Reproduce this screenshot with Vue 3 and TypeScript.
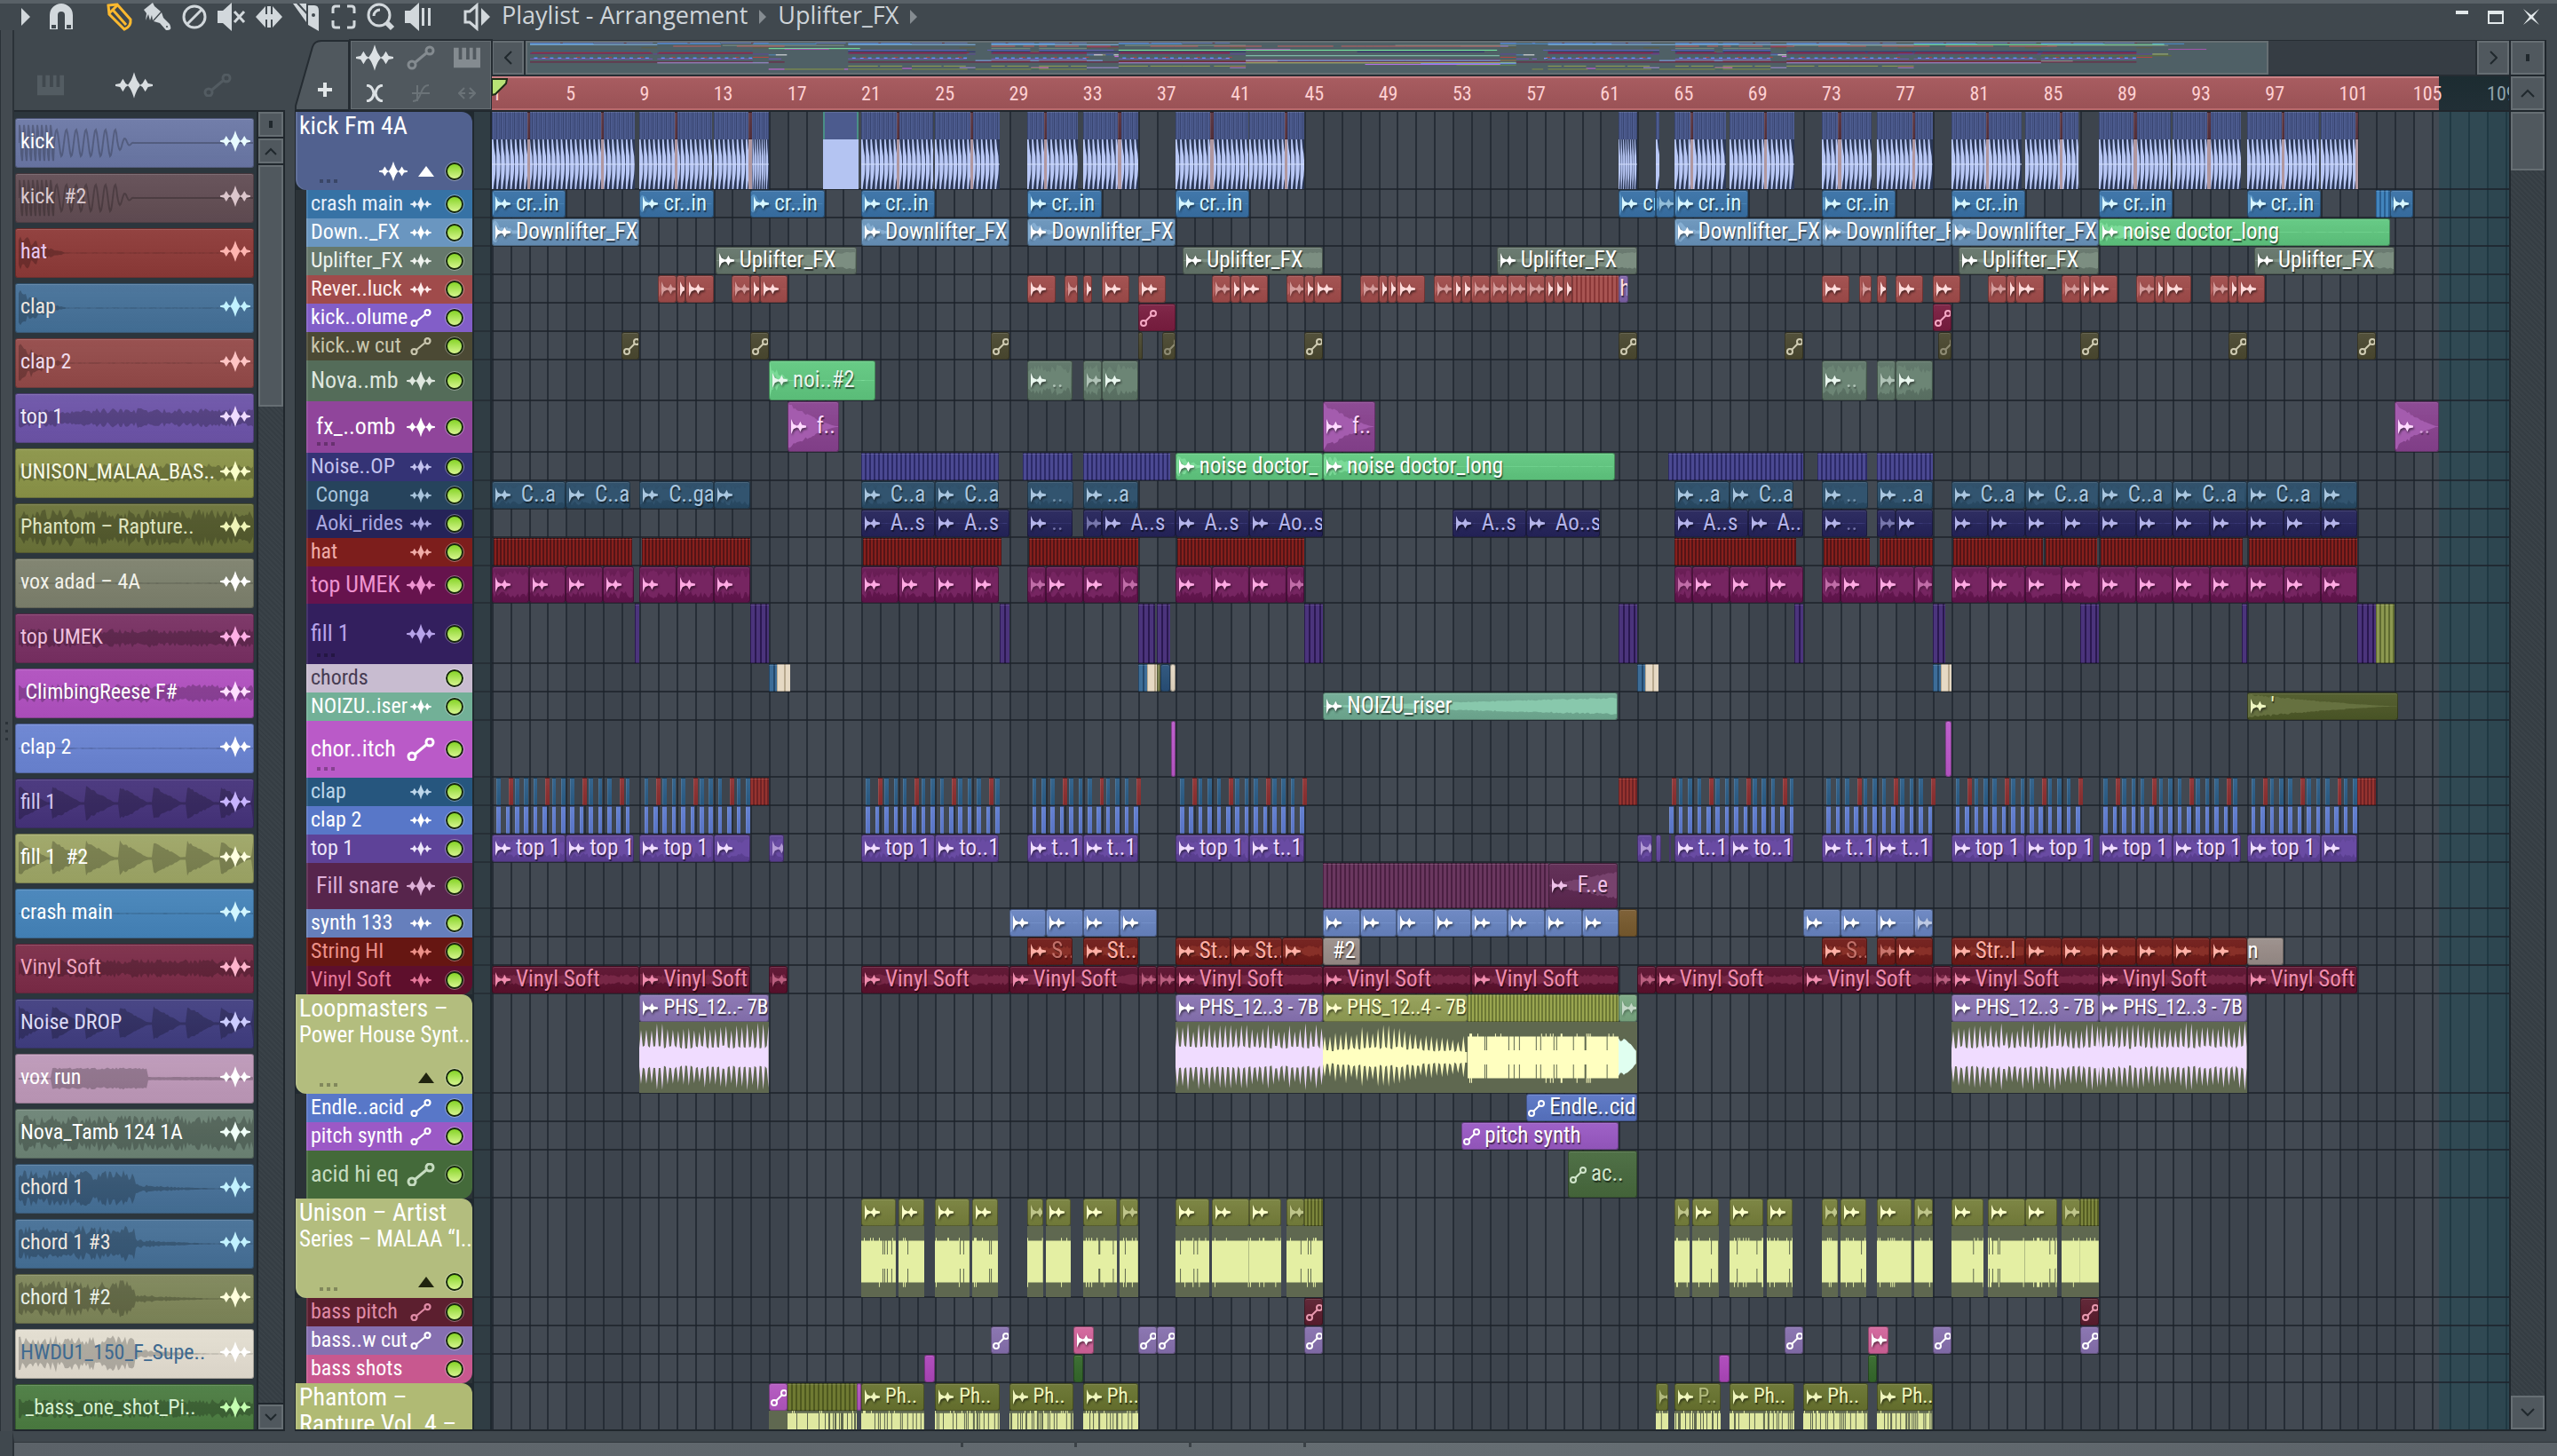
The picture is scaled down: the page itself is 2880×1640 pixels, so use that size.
<script setup lang="ts">
type IconKind = 'wave' | 'auto' | 'none'
type WaveShape = 'flat' | 'decay' | 'longDecay' | 'grow' | 'noise' | 'tail' | 'gate' | 'steady' | 'swell' | 'block' | 'comb' | 'teeth' | 'bulge' | 'puff' | 'chirp'

interface Clip {
  from: number
  to: number
  label?: string
  kind?: 'audio' | 'auto' | 'bare' | 'stripes' | 'kick' | 'kickFast' | 'kickSolid' | 'tick'
  color?: string
  ink?: string
  stripe?: string
  period?: number
  wave?: WaveShape
  low?: string
  lowWave?: WaveShape
}

interface Track {
  name: string[]
  height: number
  head: string
  ink: string
  icon: IconKind
  clip: string
  clipInk?: string
  group?: boolean
  last?: boolean
  dots?: boolean
  split?: boolean
  wave?: WaveShape
  waveColor?: string
  clips: Clip[]
}

interface PickerItem {
  name: string
  color: string
  ink: string
  icon: string
  wave: WaveShape
}

const BARS = 109.2
const BAR_UNITS = 20.8

const at = (bar: number): string => `${(bar / BARS) * 100}%`
const span = (clip: Clip): string => `${((clip.to - clip.from) / BARS) * 100}%`

function noise(seed: number): () => number {
  let s = (seed * 7919 + 104729) % 2147483647
  return () => {
    s = (s * 48271) % 2147483647
    return s / 2147483647
  }
}

function envelope(shape: WaveShape, t: number): number {
  switch (shape) {
    case 'decay': return Math.max(0.02, Math.pow(Math.max(0, 1 - t * 4.5), 1.4))
    case 'longDecay': return Math.max(0.02, Math.pow(1 - t, 1.3))
    case 'grow': return 0.04 + t * 0.66
    case 'noise': return 0.45
    case 'tail': return t < 0.5 ? 0.85 : Math.max(0.02, 0.22 * Math.pow(1 - (t - 0.5) * 2, 2))
    case 'gate': return Math.max(0.08, 1 - ((t * 7) % 1) * 1.1) * 0.85
    case 'steady': return 0.85
    case 'swell': return t < 0.14 ? 0.04 : t < 0.55 ? 0.5 : 0.08
    case 'puff': return t < 0.4 ? 0.55 : 0.55 - (t - 0.4) * 0.6
    case 'bulge': return 0.62 + 0.32 * Math.sin(Math.PI * Math.min(1, t * 1.25))
    case 'teeth': return 1
    default: return 0.03
  }
}

function barPath(width: number, mid: number, seed: number, level: number, gaps: number): string {
  const rnd = noise(seed)
  let d = ''
  for (let x = 0; x < width; x += 1) {
    const r = rnd()
    if (r < gaps && x > 0) {
      d += `M${x} ${mid - mid * 0.2}h1V${mid + mid * 0.2}h-1Z`
      continue
    }
    const a = mid * (r > 0.86 ? Math.min(1, level + 0.05) : level - 0.03)
    const b = mid * (r > 0.92 ? Math.min(1, level + 0.1) : level - 0.03)
    d += `M${x} ${(mid - a).toFixed(1)}h1V${(mid + b).toFixed(1)}h-1Z`
  }
  return d
}

function wavePath(shape: WaveShape, width: number, height: number, seed: number): string {
  const mid = height / 2
  if (shape === 'chirp') {
    let d = `M0 ${mid}`
    for (let x = 0; x <= 130; x += 1) {
      const phase = 2 * Math.PI * (x < 40 ? x / 5 : 8 + (x - 40) / 11)
      const amp = (x < 40 ? 0.85 : 0.6) * (x > 110 ? (130 - x) / 30 : 1)
      d += `L${x} ${(mid - Math.sin(phase) * mid * amp).toFixed(1)}`
    }
    return `${d}H${width}`
  }
  if (shape === 'block') return barPath(width, mid, seed, 0.62, 0.05)
  if (shape === 'comb') return barPath(width, mid, seed, 0.96, 0.24)
  const rnd = noise(seed)
  const smooth = shape === 'longDecay' || shape === 'gate' || shape === 'grow' || shape === 'puff' || shape === 'swell'
  const upper: string[] = []
  const lower: string[] = []
  let i = 0
  for (let x = 0; x <= width; x += 2) {
    const env = envelope(shape, x / Math.max(width, 1))
    const r = rnd()
    let a: number
    if (shape === 'teeth' || shape === 'bulge') a = env * (i % 3 === 1 ? 0.72 + r * 0.26 : 0.24 + r * 0.1)
    else if (smooth) a = env * (0.82 + r * 0.18)
    else a = env * (0.45 + r * 0.55)
    const b = a * (shape === 'teeth' ? 0.96 : 0.88 + rnd() * 0.12)
    upper.push(`${x} ${(mid - a * mid).toFixed(1)}`)
    lower.unshift(`${x} ${(mid + b * mid).toFixed(1)}`)
    i += 1
  }
  return `M${upper.join('L')}L${lower.join('L')}Z`
}

function kickPath(width: number, beat: number): string {
  let d = ''
  for (let x = 0; x + 1 < width; x += beat) {
    const n = (k: number): string => (x + beat * k).toFixed(1)
    d += `M${n(0)} 0L${n(0.3)} 0L${n(0.5)} 10Q${n(0.86)} 18 ${n(0.86)} 28Q${n(0.86)} 40 ${n(0.5)} 48L${n(0.3)} 56L${n(0)} 56Z`
  }
  return d
}

const units = (clip: Clip): number => Math.max(2, Math.round((clip.to - clip.from) * BAR_UNITS))

function chain(points: number[], labels: string[] = [], extra: Partial<Clip> = {}): Clip[] {
  return points.slice(1).map((to, i) => ({ from: points[i], to, label: labels[i], ...extra }))
}
function bare(from: number, to: number, color: string, extra: Partial<Clip> = {}): Clip {
  return { from, to, kind: 'bare', color, ...extra }
}
function auto(from: number, to: number, label?: string, extra: Partial<Clip> = {}): Clip {
  return { from, to, label, kind: 'auto', ...extra }
}
function stripes(from: number, to: number, color: string, stripe: string, period: number, extra: Partial<Clip> = {}): Clip {
  return { from, to, kind: 'stripes', color, stripe, period, ...extra }
}
function ticks(ranges: number[][], color: string, withSnare: boolean): Clip[] {
  const out: Clip[] = []
  ranges.forEach(([a, b]) => {
    for (let k = Math.ceil(a * 2); k < b * 2; k += 1) {
      const start = k / 2 + 0.25
      if (start + 0.2 > b + 0.05) continue
      const next = Math.round(start + 0.25)
      const onSnare = withSnare && Math.abs(start - (next - 0.25)) < 0.01 && next % 2 === (start < 36 ? 1 : 0)
      out.push(onSnare
        ? { from: start + 0.15, to: start + 0.39, kind: 'tick', color: '#8c2f30' }
        : { from: start, to: start + 0.22, kind: 'tick', color })
    }
  })
  return out
}
function markers(): Clip[] {
  const spots = [1, 5, 9, 13, 21, 25, 29, 33, 38, 42].map((n) => n + 0.9)
  const later = [64, 68, 72, 76, 80, 84, 88, 92, 96, 100].map((n) => n + 0.88)
  return [...spots, ...later].map((n) => ({ from: n, to: n + 0.16, kind: 'tick' as const, color: '#56303c', low: '#b0979f' }))
}

const kickClips: Clip[] = [
  ...[[0, 3.97], [4, 7.72], [8, 11.94], [12, 14], [20, 23.9], [24, 27.5], [29, 31.7], [32, 35], [37, 40.95], [41, 44],
    [63, 63.2], [64, 66.8], [67, 70.5], [72, 74.7], [75, 78], [79, 82.8], [83, 85.9], [87, 90.9], [91, 94.7], [95, 98.9], [99, 101]]
    .map(([from, to]) => ({ from, to, kind: 'kick' as const })),
  { from: 14, to: 15, kind: 'kickFast' },
  { from: 61, to: 62, kind: 'kickFast' },
  { from: 17.95, to: 19.85, kind: 'kickSolid' },
  ...markers(),
]

const rever = (n: number): Clip[] => chain([n, n + 1, n + 1.5, n + 3])
const fill = (from: number, to: number): Clip => stripes(from, to, '#4b347c', '#2a1850', 6)
const indigo = (from: number, to: number): Clip => stripes(from, to, '#4b4992', '#2c2a68', 5)
const hats = (from: number, to: number): Clip => stripes(from, to, '#861f1c', '#541416', 4)
const blueCream = (n: number, end: number): Clip[] => [
  stripes(n, n + 0.45, '#3d6d98', '#24486a', 6),
  stripes(n + 0.45, end, '#e6d9c4', '#b8a98f', 9),
]
const evens = [79, 81, 83, 85, 87, 89, 91, 93, 95, 97, 99, 101]
const clapRanges = [[0, 7.5], [8, 14], [20, 27.5], [29, 35], [37, 44], [63.5, 70.5], [72, 78], [79, 86], [87, 94.5], [95, 101]]
const uni = (from: number, to: number): Clip => ({ from, to, lowWave: 'block', low: '#e4efa3' })
const phan = (from: number, to: number, label?: string): Clip => ({ from, to, label, lowWave: 'comb', low: '#dfe8a0' })

const tracks: Track[] = [
  { name: ['kick Fm 4A'], height: 88, head: '#51618f', ink: '#ffffff', icon: 'wave', clip: '#4c5b8e', group: true, dots: true, split: true, clips: kickClips },
  {
    name: ['crash main'], height: 32, head: '#3672a5', ink: '#e6effa', icon: 'wave', clip: '#3871a6', clipInk: '#d6f6ff', wave: 'decay', waveColor: '#5793c4',
    clips: [
      ...[0, 8, 14, 20, 29, 37, 64, 72, 79, 87, 95].map((n) => ({ from: n, to: n + 4, label: 'cr..in' })),
      { from: 61, to: 63, label: 'cr' }, { from: 63, to: 64 },
      stripes(102, 102.75, '#4285bd', '#2a5f91', 5), { from: 102.75, to: 104 },
    ],
  },
  {
    name: ['Down.._FX'], height: 32, head: '#6a96c0', ink: '#ffffff', icon: 'wave', clip: '#6893bb', wave: 'decay', waveColor: '#86aed2',
    clips: [
      ...chain([0, 8], ['Downlifter_FX']), ...chain([20, 28], ['Downlifter_FX']), ...chain([29, 37], ['Downlifter_FX']),
      ...chain([64, 72, 79, 87], ['Downlifter_FX', 'Downlifter_FX', 'Downlifter_FX']),
      { from: 87, to: 102.75, label: 'noise doctor_long', color: '#5fc77f' },
    ],
  },
  {
    name: ['Uplifter_FX'], height: 32, head: '#66786c', ink: '#eef2ee', icon: 'wave', clip: '#64756a', wave: 'grow', waveColor: '#7c8e81',
    clips: [[12.1, 19.75], [37.4, 45], [54.4, 62], [79.4, 87], [95.4, 103]].map(([from, to]) => ({ from, to, label: 'Uplifter_FX' })),
  },
  {
    name: ['Rever..luck'], height: 32, head: '#a04b4b', ink: '#ffecec', icon: 'wave', clip: '#a04b4a', clipInk: '#ffdada', wave: 'decay', waveColor: '#b4605e',
    clips: [
      ...[9, 13, 39, 43, 81, 85, 89, 93].flatMap(rever),
      ...[29, 33, 35, 72, 76, 78].map((n) => ({ from: n, to: n + 1.5 })),
      ...[31, 74].map((n) => ({ from: n, to: n + 0.7 })), ...[32, 75].map((n) => ({ from: n, to: n + 0.5 })),
      ...chain([47, 48, 48.5, 49, 50.5]),
      ...chain([51, 52, 52.5, 53, 54, 55, 56, 57, 57.5, 58, 58.5]),
      stripes(58.5, 61, '#a85452', '#8a3838', 5), { from: 61, to: 61.5, kind: 'bare', color: '#7d62a8', label: 'h' },
    ],
  },
  {
    name: ['kick..olume'], height: 32, head: '#825ec8', ink: '#ffffff', icon: 'auto', clip: '#7a1d40', clipInk: '#f5a8c4',
    clips: [auto(35, 37), auto(78, 79)],
  },
  {
    name: ['kick..w cut'], height: 32, head: '#4b4934', ink: '#c9c6ae', icon: 'auto', clip: '#4a4830', clipInk: '#cfcbb2',
    clips: [7, 14, 27, 44, 61, 70, 86, 94, 101].map((n) => auto(n, n + 1)).concat([bare(35, 35.25, '#4a4830'), auto(36.3, 37, '', { ink: '#8f8c74' }), auto(78.3, 79, '', { ink: '#8f8c74' })]),
  },
  {
    name: ['Nova..mb'], height: 46, head: '#546c59', ink: '#dfe7df', icon: 'wave', clip: '#5c7466', clipInk: '#e9f6ee', wave: 'steady', waveColor: '#6c8575',
    clips: [
      { from: 15, to: 20.75, label: 'noi..#2', color: '#60c880', wave: 'decay' },
      ...[29, 72].flatMap((n) => [{ from: n, to: n + 2.45, label: '..' }, { from: n + 3, to: n + 4 }, { from: n + 4, to: n + 6 }]),
    ],
  },
  {
    name: ['\u00a0fx_..omb'], height: 58, head: '#90459b', ink: '#ffffff', icon: 'wave', clip: '#88428f', clipInk: '#ffd9ff', dots: true, wave: 'longDecay', waveColor: '#a45cae',
    clips: [{ from: 16, to: 18.8, label: '\u00a0f..' }, { from: 45, to: 47.8, label: '\u00a0f..' }, { from: 103, to: 105.4, label: '..' }],
  },
  {
    name: ['Noise..OP'], height: 32, head: '#343375', ink: '#c3c2ee', icon: 'wave', clip: '#37347a', wave: 'decay', waveColor: '#7bdb98',
    clips: [
      indigo(20, 27.45), indigo(28.75, 31.45), indigo(32, 36.7), indigo(63.7, 71), indigo(71.75, 74.45), indigo(75, 78),
      { from: 37, to: 45, label: 'noise doctor_', color: '#60c880', ink: '#ffffff' },
      { from: 45, to: 60.8, label: 'noise doctor_long', color: '#60c880', ink: '#ffffff' },
    ],
  },
  {
    name: ['\u00a0Conga'], height: 32, head: '#26435c', ink: '#a8c4dc', icon: 'wave', clip: '#284a65', clipInk: '#a9c6df', wave: 'steady', waveColor: '#32546f',
    clips: [
      ...chain([0, 4, 7.5], ['\u00a0C..a', '\u00a0C..a']), ...chain([8, 12, 14], ['\u00a0C..ga']), ...chain([20, 24, 27.45], ['\u00a0C..a', '\u00a0C..a']),
      ...[29, 72].map((n) => ({ from: n, to: n + 2.5, label: '..' })), ...[32, 75].map((n) => ({ from: n, to: n + 3, label: '..a' })),
      ...chain([64, 67, 70.45], ['..a', '\u00a0C..a']),
      ...chain([79, 83, 87, 91, 95, 99, 101], ['\u00a0C..a', '\u00a0C..a', '\u00a0C..a', '\u00a0C..a', '\u00a0C..a']),
    ],
  },
  {
    name: ['\u00a0Aoki_rides'], height: 32, head: '#252358', ink: '#a9a8e0', icon: 'wave', clip: '#24235a', clipInk: '#b4b4ea', wave: 'flat', waveColor: '#3b3a78',
    clips: [
      ...chain([20, 24, 28], ['\u00a0A..s', '\u00a0A..s']), { from: 29, to: 31.45, label: '..' },
      ...chain([32, 33, 37, 41, 45], ['', '\u00a0A..s', '\u00a0A..s', '\u00a0Ao..s']), ...chain([52, 56, 60], ['\u00a0A..s', '\u00a0Ao..s']),
      ...chain([64, 68, 71], ['\u00a0A..s', '\u00a0A..']), { from: 72, to: 74.45, label: '..' }, ...chain([75, 76, 78]), ...chain(evens),
    ],
  },
  {
    name: ['hat'], height: 32, head: '#7d1e1c', ink: '#f0aca8', icon: 'wave', clip: '#7d1e1c',
    clips: [hats(0.1, 7.6), hats(8.1, 14), hats(20.1, 27.6), hats(29.1, 35), hats(37.1, 44), hats(64, 70.6), hats(72.1, 74.6), hats(75.1, 78), hats(79.1, 83.95), hats(84.1, 86.9), hats(87.1, 94.8), hats(95.1, 101)],
  },
  {
    name: ['top UMEK'], height: 42, head: '#66134d', ink: '#ee93d0', icon: 'wave', clip: '#63144e', clipInk: '#ffa9e2', wave: 'steady', waveColor: '#762561',
    clips: [
      ...chain([0, 2, 4, 6, 7.7]), ...chain([8, 10, 12, 14]), ...chain([20, 22, 24, 26, 27.45]), ...chain([29, 30, 32, 34, 35]),
      ...chain([37, 39, 41, 43, 44]), ...chain([64, 65, 67, 69, 71]), ...chain([72, 73, 75, 77, 78]), ...chain(evens),
    ],
  },
  {
    name: ['fill 1'], height: 68, head: '#331f5e', ink: '#b7a3ea', icon: 'wave', clip: '#341f62', dots: true,
    clips: [
      fill(7.75, 8), fill(14, 15), fill(27.5, 28), fill(35, 35.9), fill(36, 36.7), fill(44, 45), fill(61, 62), fill(70.5, 71),
      fill(78, 78.7), fill(86, 87), fill(94.75, 95), fill(101, 102), stripes(102, 103, '#8c9850', '#5f6b30', 5),
    ],
  },
  {
    name: ['chords'], height: 32, head: '#c8bcd0', ink: '#463b52', icon: 'none', clip: '#3d6d98',
    clips: [
      ...blueCream(15, 16.15), ...blueCream(35, 36), bare(36, 36.2, '#7d8450'), bare(36.2, 36.7, '#285079'), bare(36.7, 37, '#e6d9c4'),
      ...blueCream(62, 63.15), ...blueCream(78, 79),
    ],
  },
  {
    name: ['NOIZU..iser'], height: 32, head: '#72b097', ink: '#ffffff', icon: 'wave', clip: '#70ab93', wave: 'grow', waveColor: '#88c8ac',
    clips: [{ from: 45, to: 60.95, label: 'NOIZU_riser' }, { from: 95, to: 103.2, label: '\'', color: '#4d5827', wave: 'longDecay', ink: '#edf5c0', stripe: '#667140' }],
  },
  {
    name: ['chor..itch'], height: 64, head: '#ba5ac8', ink: '#ffffff', icon: 'auto', clip: '#bb58ca', dots: true,
    clips: [bare(36.75, 37, '#bb58ca'), bare(78.7, 79, '#bb58ca')],
  },
  {
    name: ['clap'], height: 32, head: '#26567e', ink: '#bcd6ea', icon: 'wave', clip: '#2a5a82',
    clips: [...ticks(clapRanges, '#2b5d87', true), ...[14, 61, 101].map((n) => stripes(n, n + 1, '#96332f', '#702325', 4))],
  },
  {
    name: ['clap 2'], height: 32, head: '#5877c8', ink: '#ffffff', icon: 'wave', clip: '#5d7bd0',
    clips: ticks(clapRanges, '#5d7bd0', false),
  },
  {
    name: ['top 1'], height: 32, head: '#5e4298', ink: '#ece6fa', icon: 'wave', clip: '#5c4096', clipInk: '#f0dcff', wave: 'steady', waveColor: '#694ba3',
    clips: [
      ...chain([0, 4, 7.7], ['top 1', 'top 1']), ...chain([8, 12, 14], ['top 1']), { from: 15, to: 15.8 },
      ...chain([20, 24, 27.45], ['top 1', 'to..1']), ...chain([29, 32, 35], ['t..1', 't..1']), ...chain([37, 41, 44], ['top 1', 't..1']),
      { from: 62, to: 62.8 }, bare(63, 63.3, '#6549a0'), bare(63.75, 63.85, '#6549a0'),
      ...chain([64, 67, 70.45], ['t..1', 'to..1']), ...chain([72, 75, 78], ['t..1', 't..1']),
      ...chain([79, 83, 86.7], ['top 1', 'top 1']), ...chain([87, 91, 94.7], ['top 1', 'top 1']), ...chain([95, 99, 101], ['top 1']),
    ],
  },
  {
    name: ['\u00a0Fill snare'], height: 52, head: '#57254c', ink: '#deb0d8', icon: 'wave', clip: '#5c2750', clipInk: '#eec0e8', wave: 'grow', waveColor: '#77426d',
    clips: [stripes(45, 57.2, '#6a375f', '#4b2042', 5), { from: 57.2, to: 60.95, label: '\u00a0F..e' }],
  },
  {
    name: ['synth 133'], height: 32, head: '#667fbc', ink: '#ffffff', icon: 'wave', clip: '#6884c1', wave: 'decay', waveColor: '#7f9ad2',
    clips: [
      ...chain([28, 30, 32, 34, 36]), ...chain([45, 47, 49, 51, 53, 55, 57, 59, 61]), bare(61, 62, '#785a2e'), ...chain([71, 73, 75, 77, 78]),
    ],
  },
  {
    name: ['String HI'], height: 32, head: '#661612', ink: '#ec9088', icon: 'wave', clip: '#701a17', clipInk: '#ffb0a6', wave: 'noise', waveColor: '#883028',
    clips: [
      { from: 29, to: 31.45, label: 'S..' }, { from: 32, to: 35, label: 'St..' }, ...chain([37, 40, 42.8, 45], ['St..', 'St..']),
      { from: 45, to: 47, kind: 'bare', color: '#998d89', label: '#2', ink: '#ffffff' },
      { from: 72, to: 74.45, label: 'S..' }, ...chain([75, 76, 78]), ...chain([79, 83, 85, 87, 89, 91, 93, 95], ['Str..I']),
      { from: 95, to: 97, kind: 'bare', color: '#998d89', label: 'n', ink: '#ffffff' },
    ],
  },
  {
    name: ['Vinyl Soft'], height: 32, head: '#5e0f2c', ink: '#e5789a', icon: 'wave', clip: '#5b102d', clipInk: '#f08cae', last: true, wave: 'noise', waveColor: '#772746',
    clips: [
      ...chain([0, 8, 14], ['Vinyl Soft', 'Vinyl Soft']), { from: 15, to: 16 }, ...chain([20, 28, 35, 36, 37, 45, 53, 61], ['Vinyl Soft', 'Vinyl Soft', '', '', 'Vinyl Soft', 'Vinyl Soft', 'Vinyl Soft']),
      ...chain([62, 63, 71, 78, 79, 87, 95, 101], ['', 'Vinyl Soft', 'Vinyl Soft', '', 'Vinyl Soft', 'Vinyl Soft', 'Vinyl Soft']),
    ],
  },
  {
    name: ['Loopmasters –', 'Power House Synt..'], height: 112, head: '#b3bd7e', ink: '#ffffff', icon: 'none', clip: '#8873b2', group: true, dots: true, split: true,
    clips: [
      { from: 8, to: 15, label: 'PHS_12..- 7B', low: '#f0dcff', lowWave: 'teeth' },
      { from: 37, to: 45, label: 'PHS_12..3 - 7B', low: '#f0dcff', lowWave: 'teeth' },
      { from: 45, to: 52.8, label: 'PHS_12..4 - 7B', color: '#929e55', ink: '#fdffce', low: '#ffffc0', lowWave: 'bulge', stripe: '#98a45c' },
      stripes(52.8, 61, '#9aa650', '#6c7835', 4, { low: '#ffffc0', lowWave: 'block' }),
      { from: 61, to: 62, color: '#7aa882', low: '#e0fff0', lowWave: 'puff' },
      ...chain([79, 87, 95], ['PHS_12..3 - 7B', 'PHS_12..3 - 7B'], { low: '#f0dcff', lowWave: 'teeth' }),
    ],
  },
  { name: ['Endle..acid'], height: 32, head: '#5877c8', ink: '#ffffff', icon: 'auto', clip: '#5874c4', clips: [auto(56, 62, 'Endle..cid')] },
  { name: ['pitch synth'], height: 32, head: '#9b59c6', ink: '#ffffff', icon: 'auto', clip: '#9959c4', clips: [auto(52.5, 61, 'pitch synth')] },
  { name: ['acid hi eq'], height: 54, head: '#446a3a', ink: '#c6dcc0', icon: 'auto', clip: '#47693d', clipInk: '#d2e6cc', last: true, clips: [auto(58.25, 62, 'ac..')] },
  {
    name: ['Unison – Artist', 'Series – MALAA “I..'], height: 112, head: '#b3bd7e', ink: '#ffffff', icon: 'none', clip: '#767f3b', clipInk: '#fbffc8', group: true, dots: true, split: true,
    clips: [
      ...[[20, 21.87], [22, 23.4], [24, 25.87], [26, 27.4], [29, 29.85], [30, 31.35], [32, 33.85], [34, 35], [37, 38.85], [39, 41], [41, 42.75], [43, 44],
        [64, 64.85], [65, 66.4], [67, 68.85], [69, 70.4], [72, 72.85], [73, 74.4], [75, 76.85], [77, 78], [79, 80.75], [81, 83], [83, 84.75], [85, 86]].map(([a, b]) => uni(a, b)),
      stripes(44, 45, '#7c863c', '#555d24', 4, { low: '#e4efa3', lowWave: 'block' }), stripes(86, 87, '#7c863c', '#555d24', 4, { low: '#e4efa3', lowWave: 'block' }),
    ],
  },
  { name: ['bass pitch'], height: 32, head: '#5c1f2f', ink: '#e08ba6', icon: 'auto', clip: '#5a1d2e', clipInk: '#e99ab0', clips: [auto(44, 45), auto(86, 87)] },
  {
    name: ['bass..w cut'], height: 32, head: '#866fb0', ink: '#ffffff', icon: 'auto', clip: '#8670ae',
    clips: [27, 35, 36, 44, 70, 78, 86].map((n) => auto(n, n + 1)).concat([31.5, 74.5].map((n) => ({ from: n, to: n + 1.1, color: '#d2639a' }))),
  },
  {
    name: ['bass shots'], height: 32, head: '#c8588f', ink: '#ffffff', icon: 'none', clip: '#ad46bb', last: true,
    clips: [bare(23.4, 24, '#ad46bb'), bare(31.5, 32, '#34682a'), bare(66.4, 67, '#ad46bb'), bare(74.5, 75, '#34682a')],
  },
  {
    name: ['Phantom –', 'Rapture Vol. 4 –'], height: 112, head: '#b0ba74', ink: '#ffffff', icon: 'none', clip: '#68732f', clipInk: '#eff5bc', group: true, split: true,
    clips: [
      auto(15, 16, '', { color: '#b356c0', ink: '#ffffff', low: '#5f6850', lowWave: 'flat' }), stripes(16, 19.75, '#6f7a32', '#4e581f', 5, { low: '#dfe8a0', lowWave: 'comb' }), bare(19.75, 20, '#b356c0'),
      phan(20, 23.4, 'Ph..'), phan(24, 27.5, 'Ph..'), phan(28, 31.5, 'Ph..'), phan(32, 35, 'Ph..'), phan(63, 63.7), phan(64, 66.5, 'P..'),
      phan(67, 70.5, 'Ph..'), phan(71, 74.5, 'Ph..'), phan(75, 78, 'Ph..'),
    ],
  },
]

const picker: PickerItem[] = [
  { name: 'kick', color: '#6a77a5', ink: '#ffffff', icon: '#e8fbff', wave: 'chirp' },
  { name: 'kick  #2', color: '#614c53', ink: '#d9c9ce', icon: '#dcc6cc', wave: 'chirp' },
  { name: 'hat', color: '#8d3937', ink: '#e8c8f0', icon: '#ffb4b0', wave: 'decay' },
  { name: 'clap', color: '#447098', ink: '#efe8e0', icon: '#c2f2ff', wave: 'decay' },
  { name: 'clap 2', color: '#934948', ink: '#f0dcec', icon: '#ffc4c4', wave: 'decay' },
  { name: 'top 1', color: '#6c53a8', ink: '#eeeaf8', icon: '#f0dcff', wave: 'noise' },
  { name: 'UNISON_MALAA_BAS..', color: '#8a9347', ink: '#f6f8e4', icon: '#fbffca', wave: 'noise' },
  { name: 'Phantom – Rapture..', color: '#6a7238', ink: '#dfe4c0', icon: '#f0f5b8', wave: 'steady' },
  { name: 'vox adad – 4A', color: '#7c806c', ink: '#f2f2ea', icon: '#ffffff', wave: 'flat' },
  { name: 'top UMEK', color: '#782f62', ink: '#eec0de', icon: '#ffb0e6', wave: 'noise' },
  { name: '\u00a0ClimbingReese F#', color: '#b04fbf', ink: '#ffffff', icon: '#ffe0ff', wave: 'noise' },
  { name: 'clap 2', color: '#6983d2', ink: '#ffffff', icon: '#ffffff', wave: 'flat' },
  { name: 'fill 1', color: '#45327a', ink: '#d0c4f0', icon: '#c8b4ff', wave: 'gate' },
  { name: 'fill 1  #2', color: '#9da565', ink: '#ffffff', icon: '#ffffe0', wave: 'gate' },
  { name: 'crash main', color: '#4483b9', ink: '#ffffff', icon: '#d2f6ff', wave: 'flat' },
  { name: 'Vinyl Soft', color: '#7b2b47', ink: '#f0a4be', icon: '#ffb4cc', wave: 'noise' },
  { name: 'Noise DROP', color: '#403d80', ink: '#dcdaf6', icon: '#ccccff', wave: 'gate' },
  { name: 'vox run', color: '#bd98b8', ink: '#ffffff', icon: '#ffffff', wave: 'swell' },
  { name: 'Nova_Tamb 124 1A', color: '#6c8375', ink: '#ffffff', icon: '#f0fff8', wave: 'steady' },
  { name: 'chord 1', color: '#456f96', ink: '#efe8e0', icon: '#c2f2ff', wave: 'tail' },
  { name: 'chord 1 #3', color: '#456f96', ink: '#efe8e0', icon: '#c2f2ff', wave: 'tail' },
  { name: 'chord 1 #2', color: '#7d8558', ink: '#e8f0e8', icon: '#ffffdc', wave: 'tail' },
  { name: 'HWDU1_150_F_Supe..', color: '#e3ddd0', ink: '#3f6a90', icon: '#ffffff', wave: 'tail' },
  { name: '\u00a0_bass_one_shot_Pi..', color: '#4a7b40', ink: '#d6f0d0', icon: '#c4ffb0', wave: 'noise' },
]

const barLines = Array.from({ length: 110 }, (_, i) => i)
const rulerMarks = Array.from({ length: 28 }, (_, i) => i * 4)

function fillStyle(clip: Clip, track: Track): Record<string, string> {
  const base = clip.color ?? track.clip
  if (clip.kind === 'stripes' && clip.stripe) {
    const p = clip.period ?? 5
    return { background: `repeating-linear-gradient(90deg, ${clip.stripe} 0 1px, ${base} 1px ${p - 1}px, ${clip.stripe} ${p - 1}px ${p}px)` }
  }
  return { backgroundColor: base }
}
const isKick = (clip: Clip): boolean => !!clip.kind && clip.kind.startsWith('kick')
const hasIcon = (clip: Clip): boolean => !clip.kind || clip.kind === 'audio'
const clipWave = (clip: Clip, track: Track): WaveShape | undefined => (hasIcon(clip) ? clip.wave ?? track.wave : undefined)
const waveTint = (clip: Clip, track: Track): string => {
  if (clip.stripe) return clip.stripe
  if (clip.color) return '#7bdb98'
  return track.waveColor ?? '#ffffff'
}
const inkOf = (clip: Clip, track: Track): string => clip.ink ?? track.clipInk ?? '#ffffff'
const mapColor = (clip: Clip, track: Track): string => clip.color ?? track.clip
</script>

<template>
  <div class="window">
    <svg class="defs" aria-hidden="true">
      <symbol id="i-wave" viewBox="0 0 40 28">
        <path d="M20 0C22 7 24 11 27 14C24 17 22 21 20 28C18 21 16 17 13 14C16 11 18 7 20 0ZM0 13L5 12L8 7L11 12L14 14L11 16L8 21L5 16L0 15ZM40 13L35 12L32 7L29 12L26 14L29 16L32 21L35 16L40 15Z" />
      </symbol>
      <symbol id="i-clip" viewBox="0 0 18 18">
        <path d="M0 0L3 6L7 8L9 7L11 3L13 7L18 8V10L13 11L11 15L9 11L7 10L3 12L0 18Z" />
      </symbol>
      <symbol id="i-auto" viewBox="0 0 32 26">
        <g fill="none" stroke="currentColor" stroke-width="3"><circle cx="6" cy="21" r="4" /><circle cx="26" cy="5" r="4" /><path d="M10 18L22 8" /></g>
      </symbol>
      <symbol id="i-piano" viewBox="0 0 32 24">
        <path d="M0 0H6V14H10V0H15V14H19V0H23V14H27V0H32V24H0Z" />
      </symbol>
    </svg>

    <div class="topstrip"></div>

    <header class="toolbar">
      <button class="tool menu" aria-label="Playlist options"><svg width="10" height="20" viewBox="0 0 10 20"><path d="M0 0L10 10L0 20Z" /></svg></button>
      <button class="tool" aria-label="Snap to grid"><svg width="28" height="30" viewBox="0 0 28 30"><path d="M1 29V13A13 13 0 0 1 27 13V29H18V13A4 4 0 0 0 10 13V29Z" /><path class="cut" d="M3 24H8V28H3ZM20 24H25V28H20Z" /></svg></button>
      <div class="tools">
        <button class="tool draw" aria-label="Draw"><svg width="30" height="32" viewBox="0 0 30 32"><g fill="none" stroke="currentColor" stroke-width="3"><path d="M2 3L12 2L27 19Q28 27 20 30L3 13Z" /><path d="M7 8L22 25M3 12L12 3" /></g></svg></button>
        <button class="tool" aria-label="Paint"><svg width="32" height="32" viewBox="0 0 32 32"><path d="M1 8L11 0L13 4L20 10L11 20L10 14L8 20L6 13L3 20L4 12ZM21 11L23 17L30 24Q34 32 26 31L19 23L12 21Z" /><circle class="cut" cx="27" cy="27" r="1" /></svg></button>
        <button class="tool" aria-label="Delete"><svg width="28" height="28" viewBox="0 0 28 28"><g fill="none" stroke="currentColor" stroke-width="3"><circle cx="14" cy="14" r="12" /><path d="M6 22L22 6" /></g></svg></button>
        <button class="tool" aria-label="Mute"><svg width="32" height="32" viewBox="0 0 32 32"><path d="M0 9H6L16 0V32L6 23H0Z" /><path d="M19 10L30 22M30 10L19 22" fill="none" stroke="currentColor" stroke-width="3" /></svg></button>
        <button class="tool" aria-label="Slip"><svg width="30" height="26" viewBox="0 0 30 26"><path d="M0 13L11 1V10H13V1H17V10H19V1L30 13L19 25V16H17V25H13V16H11V25Z" /></svg></button>
        <button class="tool" aria-label="Slice"><svg width="30" height="32" viewBox="0 0 30 32"><path d="M0 1H4L15 13V22ZM7 1H15V10ZM17 3H24Q29 3 29 9V32L17 25Z" /><circle class="cut" cx="23" cy="14" r="2" /></svg></button>
        <button class="tool" aria-label="Select"><svg width="28" height="28" viewBox="0 0 28 28"><path d="M2 10V5Q2 2 5 2H10M18 2H23Q26 2 26 5V10M26 18V23Q26 26 23 26H18M10 26H5Q2 26 2 23V18" fill="none" stroke="currentColor" stroke-width="3" /></svg></button>
        <button class="tool" aria-label="Zoom"><svg width="32" height="32" viewBox="0 0 32 32"><g fill="none" stroke="currentColor"><circle cx="14" cy="14" r="12" stroke-width="3" /><path d="M8 15A7 7 0 0 1 15 8" stroke-width="3" /><path d="M22 22L29 29" stroke-width="6" /></g></svg></button>
        <button class="tool" aria-label="Playback"><svg width="30" height="32" viewBox="0 0 30 32"><path d="M0 9H6L16 0V32L6 23H0ZM19 6H22V26H19ZM26 6H29V26H26Z" /></svg></button>
      </div>
      <button class="tool" aria-label="Preview"><svg width="30" height="32" viewBox="0 0 30 32"><path d="M2 10H7L15 3V29L7 22H2Z" fill="none" stroke="currentColor" stroke-width="3" /><path d="M20 6L30 16L20 26Z" /></svg></button>
      <nav class="crumbs">
        <a href="#arrangement">Playlist - Arrangement</a><i></i><a href="#pattern">Uplifter_FX</a><i></i>
      </nav>
      <div class="winbtns">
        <button aria-label="Minimize"><svg width="16" height="20" viewBox="0 0 16 20"><path d="M1 3H15V7H1Z" /></svg></button>
        <button aria-label="Maximize"><svg width="20" height="20" viewBox="0 0 20 20"><path d="M1 3H19V18H1ZM3 7V16H17V7Z" fill-rule="evenodd" /></svg></button>
        <button aria-label="Close"><svg width="20" height="20" viewBox="0 0 20 20"><path d="M1 1L10 8L19 1L12 10L19 19L10 12L1 19L8 10Z" /></svg></button>
      </div>
    </header>

    <div class="workspace">
      <div class="frame-left"><i></i><i></i><i></i></div>

      <aside class="picker">
        <div class="picker-tabs">
          <button class="dim" aria-label="Patterns"><svg width="30" height="24"><use href="#i-piano" /></svg></button>
          <button aria-label="Audio clips"><svg width="42" height="30"><use href="#i-wave" /></svg></button>
          <button class="dim" aria-label="Automation clips"><svg width="32" height="26"><use href="#i-auto" /></svg></button>
        </div>
        <div class="picker-body">
          <ul class="items">
            <li v-for="(item, i) in picker" :key="i" class="item" :style="{ backgroundColor: item.color, color: item.ink }">
              <svg class="item-wave" :class="{ line: item.wave === 'chirp' }" viewBox="0 0 264 50" preserveAspectRatio="none"><path :d="wavePath(item.wave, 264, 50, i + 3)" /></svg>
              <span>{{ item.name }}</span>
              <svg class="item-icon" width="34" height="24" :style="{ color: item.icon }"><use href="#i-wave" /></svg>
            </li>
          </ul>
          <div class="vscroll small">
            <button class="sbtn" aria-label="Scroll options"><b></b></button>
            <button class="sbtn" aria-label="Scroll up"><svg width="14" height="9" viewBox="0 0 14 9"><path d="M1 8L7 2L13 8" /></svg></button>
            <div class="track"><div class="thumb"></div></div>
            <button class="sbtn" aria-label="Scroll down"><svg width="14" height="9" viewBox="0 0 14 9"><path d="M1 1L7 7L13 1" /></svg></button>
          </div>
        </div>
      </aside>

      <main class="playlist">
        <div class="head">
          <div class="headtools">
            <svg class="tabshape" viewBox="0 0 62 81" preserveAspectRatio="none"><path d="M1 81V76L20 8Q22 1 30 1H61V81Z" /></svg>
            <button class="plus" aria-label="Add track"><svg width="16" height="16" viewBox="0 0 16 16"><path d="M6 0H10V6H16V10H10V16H6V10H0V6H6Z" /></svg></button>
            <div class="toggles">
              <button aria-label="Focus audio"><svg width="42" height="30"><use href="#i-wave" /></svg></button>
              <button class="off" aria-label="Focus automation"><svg width="32" height="28"><use href="#i-auto" /></svg></button>
              <button class="off" aria-label="Focus patterns"><svg width="30" height="24"><use href="#i-piano" /></svg></button>
              <button aria-label="Cross fade"><svg width="20" height="20" viewBox="0 0 20 20"><path d="M1 1Q8 2 9 10Q8 18 1 19M19 1Q12 2 11 10Q12 18 19 19" fill="none" stroke="currentColor" stroke-width="3" /></svg></button>
              <button class="faint" aria-label="Slide"><svg width="20" height="20" viewBox="0 0 20 20"><path d="M1 19C12 19 8 1 19 1M0 10H20M6 1V19" fill="none" stroke="currentColor" stroke-width="2" /></svg></button>
              <button class="faint" aria-label="Stretch"><svg width="20" height="14" viewBox="0 0 20 14"><path d="M7 1L1 7L7 13M13 1L19 7L13 13M1 7H8M12 7H19" fill="none" stroke="currentColor" stroke-width="2" /></svg></button>
            </div>
          </div>
          <div class="maprow-wrap">
            <div class="maprow">
              <button class="sbtn arrow" aria-label="Scroll left"><svg width="9" height="16" viewBox="0 0 9 16"><path d="M8 1L1 8L8 15" /></svg></button>
              <div class="map">
                <svg class="mapview" :viewBox="`0 0 ${BARS} ${tracks.length + 4}`" preserveAspectRatio="none">
                  <template v-for="(t, ti) in tracks" :key="ti">
                    <rect v-for="(c, ci) in t.clips" :key="ci" :x="c.from" :y="ti" :width="c.to - c.from" height="1" :fill="mapColor(c, t)" />
                  </template>
                </svg>
              </div>
              <button class="sbtn arrow" aria-label="Scroll right"><svg width="9" height="16" viewBox="0 0 9 16"><path d="M1 1L8 8L1 15" /></svg></button>
            </div>
            <div class="ruler">
              <div class="song" :style="{ width: at(105.4) }"></div>
              <span v-for="m in rulerMarks" :key="m" :class="{ past: m > 105 }" :style="{ left: at(m) }">{{ m + 1 }}</span>
              <svg class="playhead" width="18" height="20" viewBox="0 0 18 20"><path d="M0 1H17L16 6L4 18L0 19Z" /></svg>
            </div>
          </div>
          <div class="corner">
            <button class="sbtn" aria-label="Scroll options"><b></b></button>
            <button class="sbtn" aria-label="Scroll up"><svg width="16" height="10" viewBox="0 0 16 10"><path d="M1 9L8 2L15 9" /></svg></button>
          </div>
        </div>

        <div class="body">
          <div class="headers">
            <section v-for="(t, i) in tracks" :key="i" class="th" :class="{ group: t.group, last: t.last, tall: t.height > 40 }" :style="{ height: t.height + 'px' }">
              <div class="plate" :style="{ backgroundColor: t.head, color: t.ink }">
                <div class="names"><span v-for="n in t.name" :key="n" :class="{ cut: n.endsWith('..') }">{{ n }}</span></div>
                <div class="marks">
                  <svg v-if="t.icon === 'wave'" class="ticon"><use href="#i-wave" /></svg>
                  <svg v-if="t.icon === 'auto'" class="ticon"><use href="#i-auto" /></svg>
                  <svg v-if="t.group" class="fold" :class="{ dark: i > 0 }" width="18" height="12" viewBox="0 0 18 12"><path d="M9 0L18 12H0Z" /></svg>
                  <button class="led" :aria-label="'Mute ' + t.name[0]"></button>
                </div>
                <div v-if="t.dots" class="dots"><i></i><i></i><i></i></div>
              </div>
            </section>
          </div>
          <div class="gutter"><i v-for="(t, i) in tracks" :key="i" :style="{ height: t.height + 'px' }"></i></div>
          <div class="lanes">
            <div class="grid">
              <i v-for="b in 14" :key="'s' + b" class="shade" :style="{ left: at((b - 1) * 8), width: at(4) }"></i>
              <i v-for="b in barLines" :key="b" class="bar" :style="{ left: at(b) }"></i>
              <i class="beyond" :style="{ left: at(105.4) }"></i>
            </div>
            <div v-for="(t, i) in tracks" :key="i" class="lane" :class="{ split: t.split }" :style="{ height: t.height + 'px' }">
              <div v-for="(c, j) in t.clips" :key="j" class="clip" :class="[c.kind ?? 'audio', { kicky: isKick(c), lead: c.label === 'n' }]" :style="{ left: at(c.from), width: span(c) }">
                <div class="face" :style="[fillStyle(c, t), { color: inkOf(c, t) }]">
                  <svg v-if="clipWave(c, t)" class="cwave" :viewBox="`0 0 ${units(c)} 30`" preserveAspectRatio="none"><path :d="wavePath(clipWave(c, t)!, units(c), 30, i * 31 + j)" :fill="waveTint(c, t)" /></svg>
                  <svg v-if="hasIcon(c)" class="cicon" :class="{ weak: c.to - c.from < 1.05 && c.to - c.from !== 0.5 }" width="17" height="17"><use href="#i-clip" /></svg>
                  <svg v-if="c.kind === 'auto'" class="aicon" width="20" height="20" viewBox="0 0 20 20"><g fill="none" stroke="currentColor" stroke-width="2"><circle cx="4" cy="16" r="3" /><circle cx="15" cy="5" r="3" /><path d="M6 14L13 7" /></g></svg>
                  <span v-if="c.label" :class="{ weak: hasIcon(c) && c.to - c.from > 2 && c.to - c.from < 2.6 }">{{ c.label }}</span>
                </div>
                <div v-if="isKick(c)" class="low kicklow">
                  <svg v-if="c.kind !== 'kickSolid'" :viewBox="`0 0 ${units(c)} 56`" preserveAspectRatio="none"><path :d="kickPath(units(c), c.kind === 'kick' ? 5.2 : 2.6)" fill="#b9c8f6" /><path :d="`M0 28H${units(c)}`" stroke="#d4dffc" /></svg>
                </div>
                <div v-else-if="t.split && c.kind === 'tick'" class="low" :style="{ backgroundColor: c.low }"></div>
                <div v-else-if="t.split && c.lowWave" class="low loop">
                  <svg :viewBox="`0 0 ${units(c)} 80`" preserveAspectRatio="none"><path :d="wavePath(c.lowWave, units(c), 80, j + 5)" :fill="c.low" /></svg>
                </div>
              </div>
            </div>
          </div>
          <div class="vscroll">
            <div class="track"><div class="thumb"></div></div>
            <button class="sbtn" aria-label="Scroll down"><svg width="16" height="10" viewBox="0 0 16 10"><path d="M1 1L8 8L15 1" /></svg></button>
          </div>
        </div>
      </main>
    </div>

    <footer class="status"><i></i><i></i><i></i><i></i></footer>
  </div>
</template>

<style>
body { background: #3f474d; }
</style>

<style scoped>
.window { height: 100vh; display: flex; flex-direction: column; background: #40484e; font-family: "Roboto Condensed", Roboto, sans-serif; color: #d5dade; overflow: hidden; }
.window *, .window *::before { box-sizing: border-box; }
.defs { position: absolute; width: 0; height: 0; }
svg { fill: currentColor; flex: none; }
button { border: 0; background: none; padding: 0; margin: 0; color: inherit; font: inherit; display: flex; align-items: center; justify-content: center; }
.topstrip { height: 4px; flex: none; background: #596167; }

.toolbar { height: 30px; flex: none; display: flex; align-items: center; padding-left: 16px; }
.tool { width: 42px; height: 32px; color: #d2d8dc; }
.tool.menu { width: 26px; margin-right: 6px; }
.tool .cut { fill: #40484e; }
.tool.draw { color: #fcb92f; }
.tools { display: flex; margin: 0 24px; }
.crumbs { display: flex; align-items: center; gap: 13px; margin: -4px 0 0 7px; font-family: "Open Sans", sans-serif; font-size: 27px; line-height: 34px; }
.crumbs a { color: #ced4d9; text-decoration: none; }
.crumbs i { width: 0; height: 0; margin-top: 4px; border-left: 8px solid #858c91; border-top: 8px solid transparent; border-bottom: 8px solid transparent; }
.winbtns { margin-left: auto; display: flex; gap: 20px; padding-right: 19px; color: #e2e8ea; }

.workspace { flex: 1; min-height: 0; display: flex; padding-right: 12px; }
.frame-left { width: 16px; border-right: 2px solid #2b3238; border-left: 1px solid #2b3238; background: #434a50; display: flex; flex-direction: column; justify-content: center; align-items: center; gap: 6px; }
.frame-left i { width: 3px; height: 3px; background: #2b3238; }

.picker { width: 305px; flex: none; margin-right: 11px; display: flex; flex-direction: column; }
.picker-tabs { height: 92px; flex: none; display: flex; gap: 12px; padding-top: 34px; border-bottom: 2px solid #22292f; }
.picker-tabs button { width: 82px; color: #d8dde0; }
.picker-tabs .dim { color: #535c62; }
.picker-body { flex: 1; min-height: 0; display: flex; background: #2c363d; border-right: 2px solid #20272d; border-bottom: 2px solid #20272d; }
.items { flex: 1; min-width: 0; list-style: none; margin: 0; padding: 7px 3px 0 1px; display: flex; flex-direction: column; gap: 6px; overflow: hidden; }
.item { position: relative; height: 56px; flex: none; display: flex; align-items: center; justify-content: space-between; padding: 0 3px 4px 5px; border-radius: 3px; font-size: 24px; border: 1px solid rgba(0, 0, 0, .25); box-shadow: inset 0 1px 0 rgba(255, 255, 255, .14); background-image: linear-gradient(rgba(255, 255, 255, .05), rgba(0, 0, 0, .04)); white-space: pre; }
.item > * { position: relative; }
.item .item-wave { position: absolute; left: 3px; top: 2px; width: 264px; height: 50px; color: #000; opacity: .22; }
.item .item-wave.line { fill: none; stroke: #000; stroke-width: 2; }

.sbtn { background: #50585e; border: 2px solid #666e73; color: #20282d; }
.sbtn svg { fill: none; stroke: currentColor; stroke-width: 2; }
.sbtn b { width: 4px; height: 8px; background: #20282d; }
.vscroll { width: 42px; flex: none; display: flex; flex-direction: column; padding: 0 2px; background: #20272d; }
.vscroll .track { flex: 1; background: repeating-linear-gradient(45deg, #353d43 0 2px, #3a4248 2px 4px); }
.vscroll .thumb { height: 66px; background: #50585e; border: 2px solid #666e73; }
.vscroll .sbtn { height: 38px; }
.vscroll.small { width: 30px; padding: 0 0 0 2px; gap: 2px; }
.vscroll.small .sbtn { height: 28px; }
.vscroll.small .thumb { height: 272px; }

.playlist { flex: 1; min-width: 0; display: flex; flex-direction: column; }
.head { height: 92px; flex: none; display: flex; padding-top: 11px; }
.headtools { position: relative; width: 222px; flex: none; display: flex; border-bottom: 2px solid #20272d; }
.tabshape { position: absolute; left: 0; top: 0; width: 62px; height: 79px; fill: #50585e; stroke: #252c32; stroke-width: 2; }
.plus { position: relative; width: 62px; padding: 32px 0 0 6px; color: #e2e6e8; }
.toggles { flex: 1; display: grid; grid-template-columns: repeat(3, 1fr); grid-template-rows: 36px 39px; background: #50585e; border: 2px solid #666e73; outline: 2px solid #252c32; outline-offset: -1px; color: #dce1e4; }
.toggles .off { color: #848b90; }
.toggles .faint { color: #6b7378; }
.toggles .faint, .toggles button:nth-child(4) { padding-top: 4px; }
.maprow-wrap { flex: 1; min-width: 0; display: flex; flex-direction: column; }
.maprow { height: 41px; flex: none; display: flex; gap: 2px; padding: 1px 0 2px; background: #262d33; }
.maprow .arrow { width: 36px; }
.map { flex: 1; min-width: 0; background: #363d44; }
.mapview { display: block; width: 89.4%; height: 38px; background: #4f6066; border: 2px solid #666f73; padding-left: 3px; }
.mapview rect { filter: brightness(1.3); }
.ruler { position: relative; flex: 1; overflow: hidden; background: linear-gradient(#1c2c31, #212f36); border-bottom: 2px solid #20272d; font-size: 22px; line-height: 38px; }
.song { height: 100%; background: linear-gradient(#a85c60, #9a5256); border-top: 2px solid #cc8286; border-bottom: 2px solid #b86a6c; }
.ruler span { position: absolute; top: 1px; color: #ffd0d2; }
.ruler .past { color: #8fa3ab; }
.playhead { position: absolute; left: 0; top: 2px; fill: #b8e276; stroke: #1d2c16; stroke-width: 2; }
.corner { width: 42px; flex: none; display: flex; flex-direction: column; padding: 1px 2px 2px; gap: 2px; background: #20272d; }
.corner .sbtn { flex: 1; }

.body { flex: 1; min-height: 0; display: flex; overflow: hidden; border-bottom: 2px solid #20272d; }
.headers { width: 202px; flex: none; background: #20292f; overflow: hidden; border-left: 1px solid #20272d; padding-right: 2px; }
.th { padding-left: 12px; background: #2b3237; }
.plate { position: relative; height: 100%; display: flex; align-items: center; padding-left: 5px; box-shadow: inset 2px 0 0 rgba(255, 255, 255, .1); }
.names { flex: 1; min-width: 0; display: flex; flex-direction: column; padding-bottom: 2px; font-size: 24px; line-height: 30px; white-space: nowrap; }
.marks { display: flex; align-items: center; padding-right: 10px; }
.ticon { width: 24px; height: 20px; margin-right: 16px; }
.tall .ticon { width: 32px; height: 26px; margin-right: 12px; }
.tall .names { font-size: 26px; }
.led { width: 20px; height: 20px; border-radius: 10px; background: linear-gradient(#86d428, #d6f58e); border: 2px solid #16280c; outline: 1px solid rgba(255, 255, 255, .35); }
.th.group { padding-left: 0; background: #20292f; }
.group .plate { flex-direction: column; align-items: stretch; justify-content: space-between; padding-left: 4px; border-radius: 0 12px 0 12px; }
.group .names { flex: none; padding-top: 1px; font-size: 28px; }
.group .names .cut { font-size: 25px; }
.group .marks { justify-content: flex-end; padding-bottom: 8px; }
.fold { margin-right: 13px; }
.fold.dark { color: #20240f; }
.last .plate { border-radius: 0 0 12px 0; }
.dots { position: absolute; left: 12px; bottom: 8px; display: flex; gap: 4px; }
.dots i { width: 4px; height: 4px; background: #000; opacity: .28; }
.group .dots { left: 27px; }
.gutter { width: 20px; flex: none; display: flex; flex-direction: column; background: #303d44; border-right: 2px solid #1f2830; }
.gutter i { flex: none; border-bottom: 2px solid #262f36; }

.lanes { position: relative; flex: 1; min-width: 0; overflow: hidden; }
.grid { position: absolute; inset: 0; background: #3d444d; }
.grid i { position: absolute; top: 0; bottom: 0; }
.shade { background: #424952; }
.bar { width: 2px; background: #262d36; }
.beyond { right: 0; background: rgba(25, 75, 85, .42); }
.lane { position: relative; border-bottom: 2px solid rgba(28, 34, 42, .75); }
.clip { position: absolute; top: 0; bottom: -1px; display: flex; flex-direction: column; }
.face { position: relative; flex: 1; min-height: 0; display: flex; align-items: center; overflow: hidden; border: 1px solid rgba(0, 0, 0, .3); border-radius: 3px; background-image: linear-gradient(rgba(255, 255, 255, .05), rgba(0, 0, 0, .06)); box-shadow: inset 0 1px 0 rgba(255, 255, 255, .12); white-space: nowrap; font-size: 25px; line-height: 28px; }
.face span { position: relative; margin-left: 6px; padding-bottom: 2px; text-shadow: 1px 2px 1px rgba(0, 0, 0, .55); }
.face .weak { opacity: .55; }
.bare .face span { margin-left: auto; padding-right: 4px; }
.bare.lead .face span { margin-left: 0; }
.cwave { position: absolute; inset: 0; width: 100%; height: 100%; }
.cicon { position: relative; margin-left: 3px; filter: drop-shadow(1px 2px 1px rgba(0, 0, 0, .5)); }
.aicon { position: relative; margin-left: 1px; }
.auto .face span { margin-left: 4px; }
.split .face { flex: none; height: 31px; font-size: 23px; }
.stripes .face, .tick .face { border-width: 1px 0; border-radius: 0; }
.tick .face { box-shadow: inset 1px 0 0 rgba(255, 255, 255, .12); }
.low { flex: 1; min-height: 0; position: relative; }
.low svg { position: absolute; inset: 0; width: 100%; height: 100%; }
.low.loop { background: #5f6850; }
.kicky .face { border: 0; border-radius: 0; background-image: repeating-linear-gradient(90deg, rgba(20, 28, 60, .35) 0 1px, transparent 1px 3px, rgba(20, 28, 60, .2) 3px 4px, transparent 4px 5px); }
.kickSolid .face { background-image: none; border-left: 2px solid #4a8f86; border-right: 2px solid #4a8f86; }
.kicklow { background: #2c3958; }
.kickSolid .kicklow { background: #b4c4f2; }

.status { height: 28px; flex: none; margin-left: 14px; padding-left: 37%; display: flex; gap: 7%; background: linear-gradient(90deg, #5b6268, #656d72 60%, #5b6268); border-top: 12px solid #40484e; border-left: 2px solid #2b3238; box-shadow: inset 0 1px 0 #30373c; }
.status i { width: 3px; height: 6px; background: #3a4146; }
</style>
